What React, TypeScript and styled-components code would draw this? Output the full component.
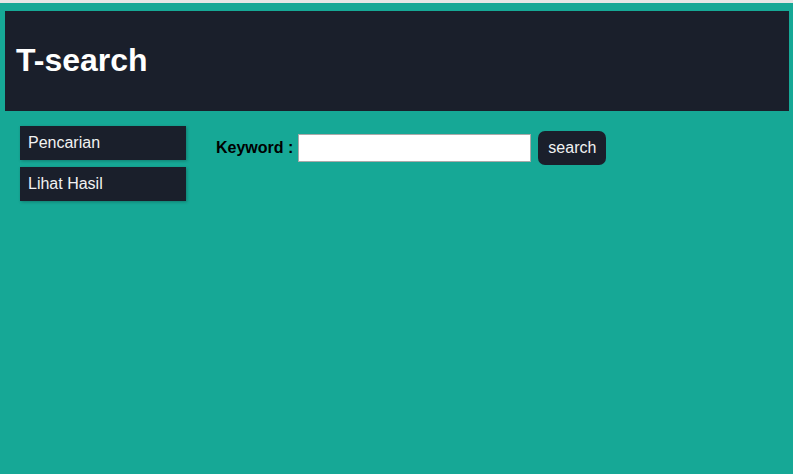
import React from "react";
import styled, { createGlobalStyle } from "styled-components";

const Global = createGlobalStyle`
  html, body { margin: 0; padding: 0; background: #16a896; }
  body { font-family: "Liberation Sans", Arial, sans-serif; }
`;

const Page = styled.div`
  min-height: 474px;
  box-sizing: border-box;
  border-top: 3px solid #e6e6e6;
  background: #16a896;
  padding: 8px 4px 0 5px;
`;

const Header = styled.header`
  height: 100px;
  box-sizing: border-box;
  background: #1a1f2b;
  display: flex;
  align-items: center;
  padding: 0 0 2px 11px;
`;

const Title = styled.h1`
  margin: 0;
  color: #ffffff;
  font-size: 32px;
  font-weight: bold;
`;

const Main = styled.div`
  display: flex;
  align-items: flex-start;
  padding: 15px 15px 0 15px;
  gap: 30px;
`;

const Sidebar = styled.nav`
  display: flex;
  flex-direction: column;
  gap: 7px;
  width: 166px;
`;

const NavItem = styled.a`
  display: flex;
  align-items: center;
  height: 34px;
  padding-left: 8px;
  background: #1a1f2b;
  color: #f2f2f2;
  font-size: 16px;
  text-decoration: none;
  box-shadow: 1px 1px 3px rgba(0, 0, 0, 0.25);
`;

const SearchForm = styled.form`
  display: flex;
  align-items: center;
  margin-top: 5px;
`;

const Label = styled.label`
  font-weight: bold;
  font-size: 16px;
  color: #000;
  margin-right: 5px;
`;

const Input = styled.input`
  width: 233px;
  height: 28px;
  box-sizing: border-box;
  border: 1px solid #a9a9a9;
  background: #fff;
  padding: 2px 4px;
  font-size: 16px;
  margin-right: 7px;
  outline: none;
`;

const Button = styled.button`
  height: 34px;
  width: 68px;
  border: none;
  border-radius: 7px;
  background: #1a1f2b;
  color: #f2f2f2;
  font-family: "Liberation Sans", Arial, sans-serif;
  font-size: 16px;
  padding: 0;
  cursor: pointer;
`;

export default function App() {
  return (
    <>
      <Global />
      <Page>
        <Header>
          <Title>T-search</Title>
        </Header>
        <Main>
          <Sidebar>
            <NavItem href="#">Pencarian</NavItem>
            <NavItem href="#">Lihat Hasil</NavItem>
          </Sidebar>
          <SearchForm onSubmit={(e) => e.preventDefault()}>
            <Label htmlFor="kw">Keyword :</Label>
            <Input id="kw" type="text" />
            <Button type="submit">search</Button>
          </SearchForm>
        </Main>
      </Page>
    </>
  );
}
